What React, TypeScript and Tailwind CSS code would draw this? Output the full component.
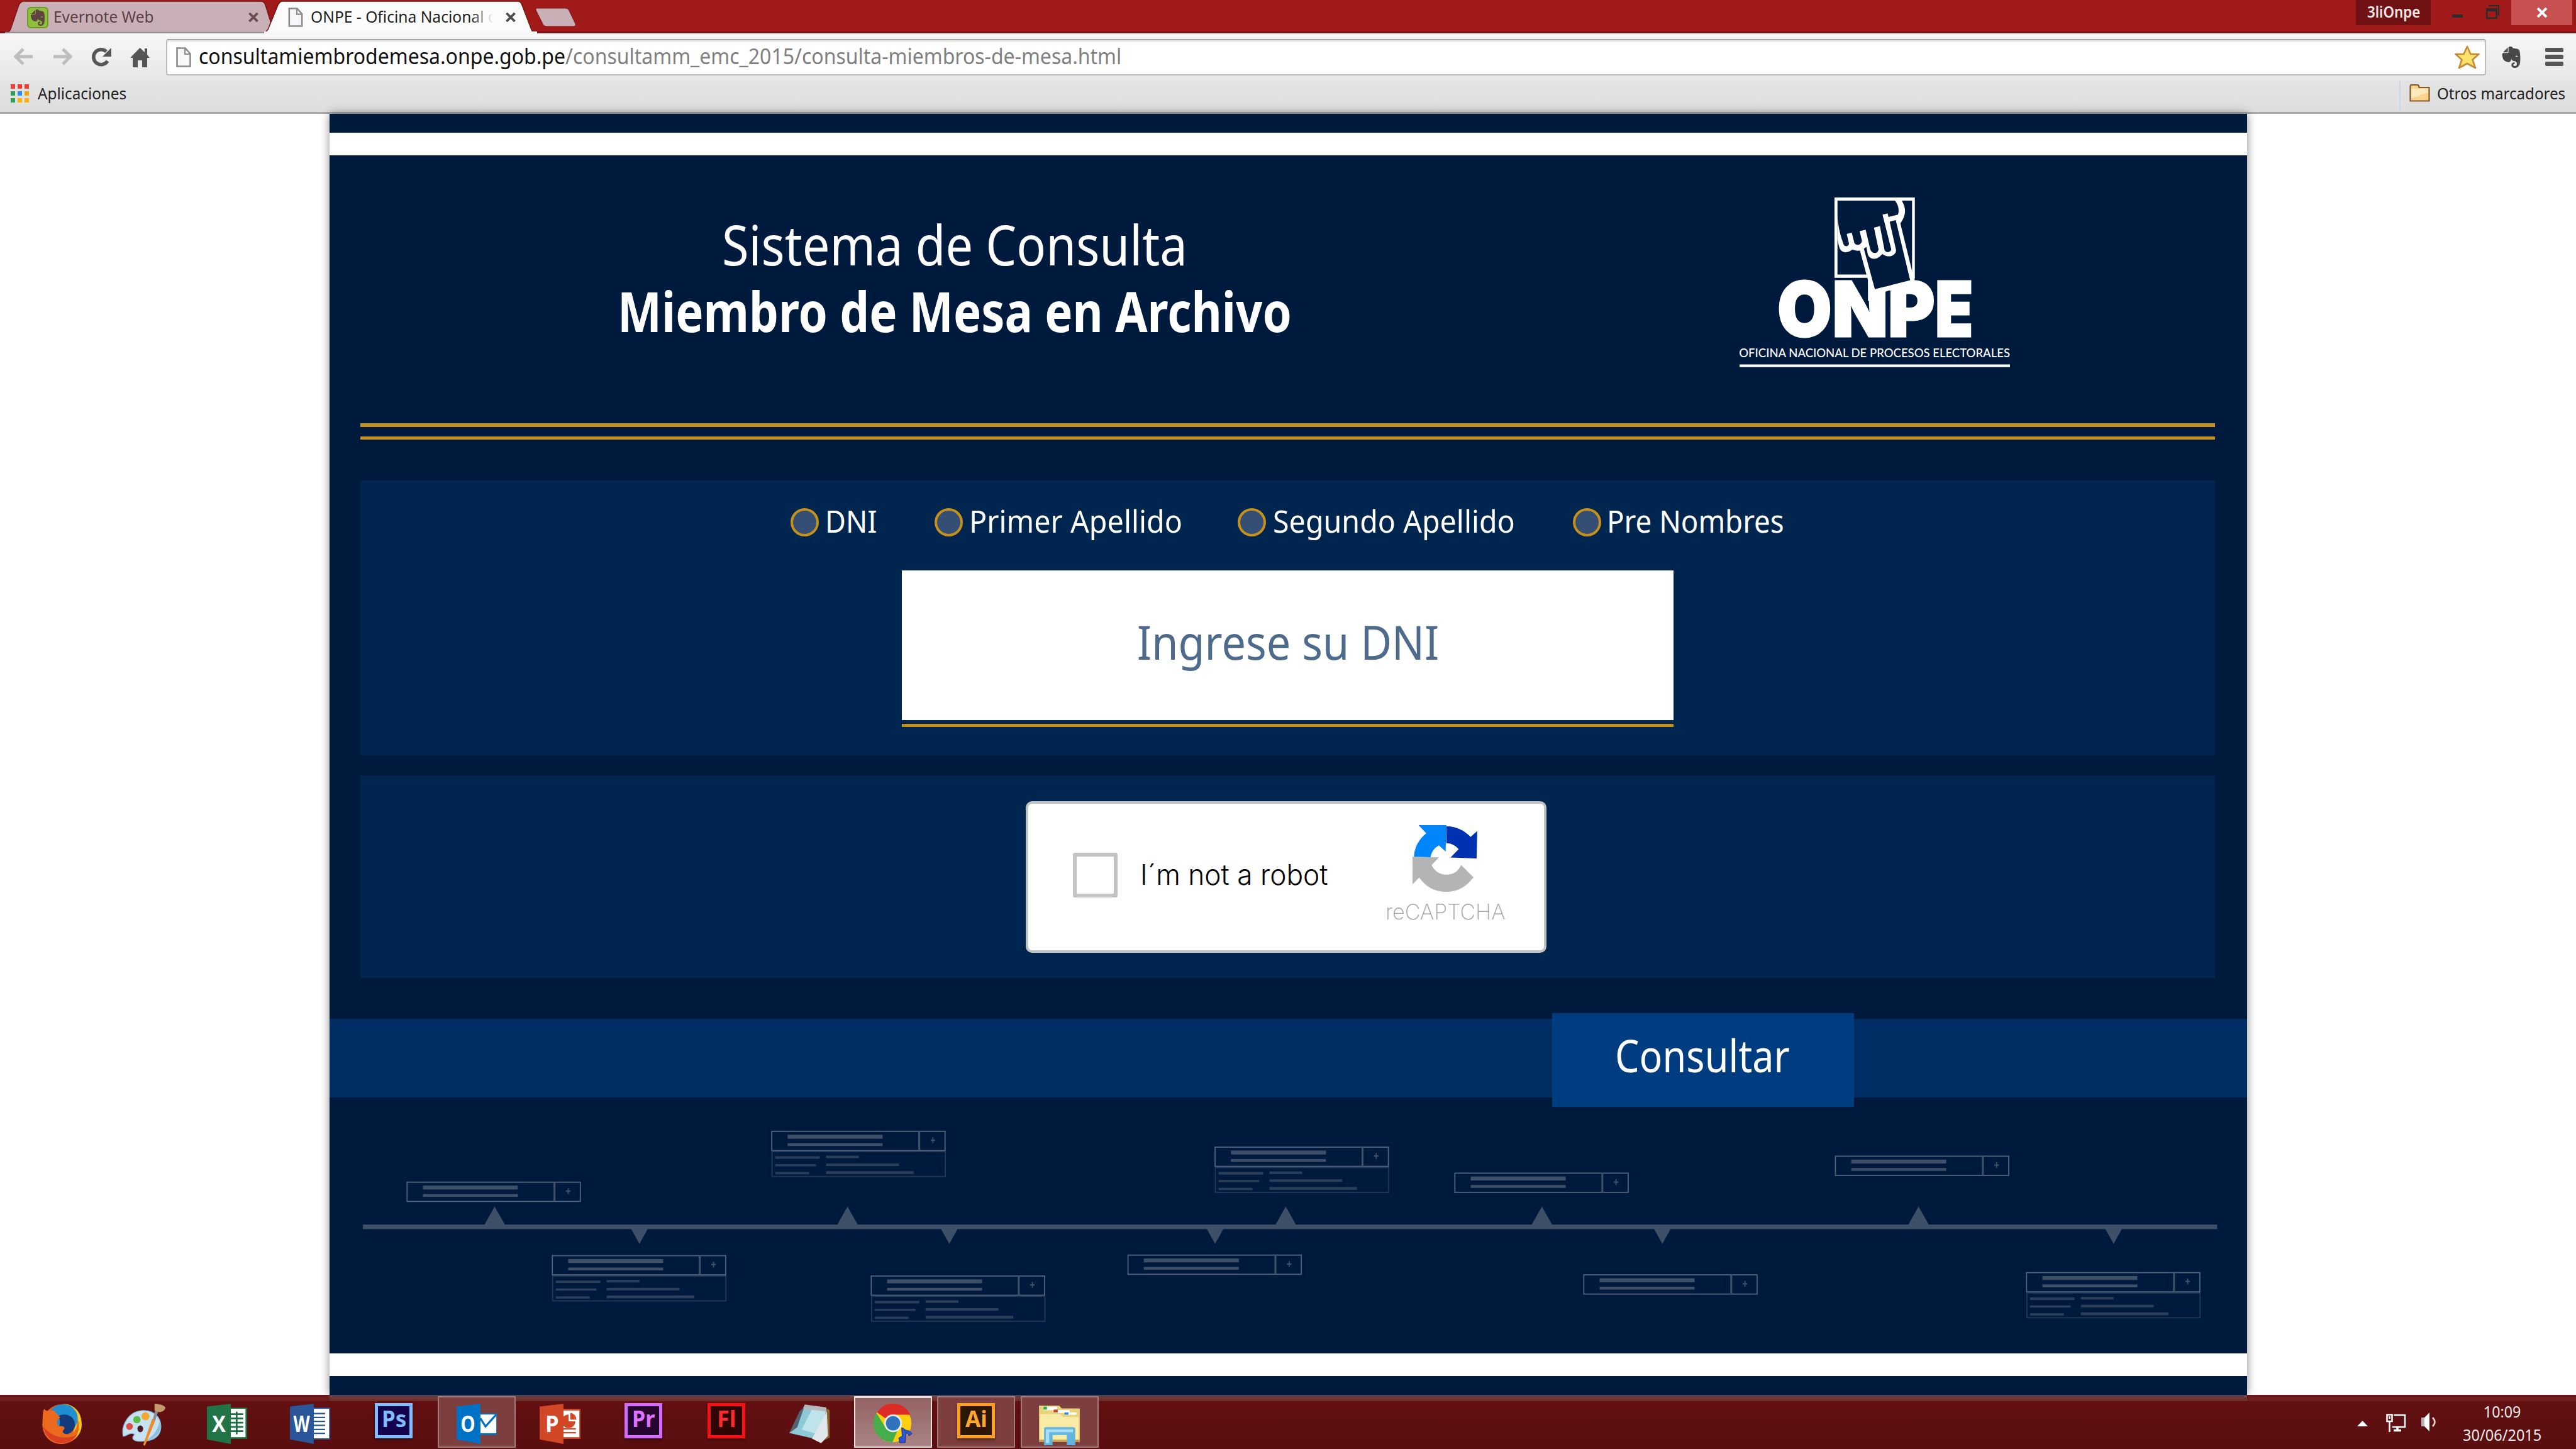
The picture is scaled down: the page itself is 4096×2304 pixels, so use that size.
import React, { useLayoutEffect, useRef, useState } from "react";
import { SiEvernote } from "react-icons/si";

/* Single-line text stretched horizontally so that it fills its box exactly. */
function Fit({ className = "", children }: { className?: string; children: React.ReactNode }) {
  const box = useRef<HTMLDivElement>(null);
  const text = useRef<HTMLSpanElement>(null);
  const [k, setK] = useState(1);
  useLayoutEffect(() => {
    if (box.current && text.current) setK(box.current.clientWidth / text.current.offsetWidth);
  }, []);
  return (
    <div ref={box} className={`shrink-0 whitespace-nowrap leading-none ${className}`}>
      <span ref={text} className="inline-block origin-left" style={{ transform: `scaleX(${k})` }}>
        {children}
      </span>
    </div>
  );
}

function PageIcon({ className = "" }: { className?: string }) {
  return (
    <svg className={`shrink-0 ${className}`} viewBox="0 0 24 32" fill="none">
      <path d="M1.5 1.5h13l8 9v20h-21z" fill="#f7f7f9" stroke="#8c8c8c" strokeWidth="2.6" />
      <path d="M14 1.5v9.5h8.5" stroke="#8c8c8c" strokeWidth="2.2" />
    </svg>
  );
}

function CloseX({ className = "" }: { className?: string }) {
  return (
    <svg className={`shrink-0 ${className}`} viewBox="0 0 18 16" fill="none" stroke="currentColor" strokeWidth="4">
      <path d="M2 1l14 14M16 1L2 15" />
    </svg>
  );
}

function TitleBar() {
  return (
    <div className="relative flex h-[53px] w-full items-start bg-[#a01a1a] shadow-[inset_0_-3px_1px_#7c1313]">
      <div className="relative flex h-[53px] w-[432px] shrink-0 items-start">
        <svg className="absolute left-0 top-0 h-[53px] w-[450px]" viewBox="0 0 450 53">
          <path d="M5 53Q15 52 17 46L30 8Q33 2 38 2H414Q420 2 422 8L436 53Z" fill="#c9b0b7" stroke="#7c1517" strokeWidth="1.5" />
          <path d="M8 52H430" stroke="#8b8f95" strokeWidth="2.5" />
        </svg>
        <div className="relative ml-[43px] mt-[11px] flex h-[34px] w-[34px] shrink-0 items-center justify-center rounded-[6px] border-2 border-[#6d9a22] bg-[#8fbf3a]">
          <SiEvernote className="h-[28px] w-[26px] text-[#5e4340]" />
        </div>
        <Fit className="relative ml-[8px] mt-[14px] w-[159px] text-[25px] text-[#5b3f45]">Evernote Web</Fit>
        <CloseX className="relative ml-[150px] mt-[20px] h-[15px] w-[18px] text-[#6d4a50]" />
      </div>
      <div className="relative flex h-[53px] w-[412px] shrink-0 items-start">
        <svg className="absolute -left-[14px] top-0 h-[53px] w-[440px]" viewBox="0 0 440 53">
          <path d="M2 53L8 47L24 8Q27 2 31 2H405Q410 2 412 8L427 47Q429 52 436 53Z" fill="#fbfbfb" stroke="#6f1515" strokeWidth="1.5" />
          <path d="M2 50h434v3h-434z" fill="#f8f8f8" />
        </svg>
        <PageIcon className="relative ml-[26px] mt-[12px] h-[31px] w-[24px]" />
        <div className="relative ml-[12px] mt-[12px] w-[290px] shrink-0 overflow-hidden pt-[2px]">
          <Fit className="h-[32px] w-[297px] text-[25px] text-[#1f1f1f]">ONPE - Oficina Nacional d</Fit>
          <div className="absolute right-0 top-0 h-[32px] w-[36px] bg-linear-to-r from-transparent to-[#fbfbfb]" />
        </div>
        <CloseX className="relative ml-[19px] mt-[20px] h-[15px] w-[18px] text-[#4d4d4d]" />
      </div>
      <svg className="ml-[7px] mt-[12px] h-[31px] w-[66px] shrink-0" viewBox="0 0 66 31">
        <path d="M3 1H48Q53 1 54 5L64 26Q65 30 61 30H18Q13 30 12 26L1 4Q0 1 3 1Z" fill="#c9b0b7" stroke="#7c1517" />
      </svg>
      <div className="ml-auto flex h-[40px] items-start">
        <div className="h-[40px] w-[119px] bg-[#701214] pl-[18px] pt-[6px]">
          <Fit className="w-[84px] text-[25px] font-semibold text-[#f0e6e6]">3liOnpe</Fit>
        </div>
        <div className="ml-[34px] mt-[23px] h-[5px] w-[17px] bg-[#2c2c2c]" />
        <svg className="ml-[37px] mt-[8px] h-[22px] w-[21px]" viewBox="0 0 21 22" fill="#2c2c2c">
          <path d="M0 5h18v17H0zM2.500 10v9.500h13V10z" fillRule="evenodd" />
          <path d="M4 0h17v17h-2V2H4z" />
        </svg>
        <div className="ml-[19px] mr-[6px] flex h-[40px] w-[97px] items-center justify-center bg-[#c75050]">
          <CloseX className="h-[16px] w-[18px] text-white" />
        </div>
      </div>
    </div>
  );
}

function Toolbar() {
  return (
    <div className="flex h-[75px] w-full items-start bg-linear-to-b from-[#f8f8f8] to-[#e6e6e6]">
      <svg className="ml-[21px] mt-[23px] h-[28px] w-[32px] shrink-0" viewBox="0 0 32 28" fill="none" stroke="#bdbdbd" strokeWidth="5">
        <path d="M31 14H5M16 2L4 14L16 26" />
      </svg>
      <svg className="ml-[31px] mt-[23px] h-[28px] w-[32px] shrink-0" viewBox="0 0 32 28" fill="none" stroke="#bdbdbd" strokeWidth="5">
        <path d="M1 14H27M16 2L28 14L16 26" />
      </svg>
      <svg className="ml-[28px] mt-[22px] h-[32px] w-[34px] shrink-0" viewBox="0 0 34 32">
        <path d="M27 22A12 12 0 1 1 25 7" fill="none" stroke="#555" strokeWidth="5.500" />
        <path d="M33 1V15H19Z" fill="#555" />
      </svg>
      <svg className="ml-[29px] mt-[22px] h-[32px] w-[31px] shrink-0" viewBox="0 0 31 32" fill="#555">
        <path d="M15.500 1L0 17h4v15h8V21h7v11h8V17h4L27 12V2h-4v6z" />
      </svg>
      <div className="ml-[26px] mt-[9px] flex h-[58px] w-[3689px] items-start rounded-[4px] border-2 border-[#bcbcbc] border-t-[#a2a2a2] bg-white shadow-[inset_0_3px_0_#ebebeb]">
        <PageIcon className="ml-[14px] mt-[11px] h-[32px] w-[24px]" />
        <Fit className="ml-[12px] mt-[8px] w-[1467px] text-[34px] text-[#808080]">
          <span className="text-[#111]">consultamiembrodemesa.onpe.gob.pe</span>/consultamm_emc_2015/consulta-miembros-de-mesa.html
        </Fit>
        <svg className="ml-auto mr-[8px] mt-[8px] h-[38px] w-[40px]" viewBox="0 0 40 38">
          <path d="M20 2L25.500 14H38.500L28.500 23L33 36L20 29L7 36L11.500 23L1.500 14H14.500Z" fill="#fde36c" stroke="#c88a34" strokeWidth="2.600" strokeLinejoin="round" />
        </svg>
      </div>
      <SiEvernote className="ml-[23px] mt-[21px] h-[34px] w-[34px] shrink-0 text-[#484848]" />
      <div className="ml-[37px] mt-[23px] flex w-[29px] shrink-0 flex-col gap-[4px]">
        <div className="h-[7px] rounded-[2px] bg-[#555]" />
        <div className="h-[7px] rounded-[2px] bg-[#555]" />
        <div className="h-[7px] rounded-[2px] bg-[#555]" />
      </div>
    </div>
  );
}

function Bookmarks() {
  const dots = ["bg-[#f8372f]", "bg-[#f8372f]", "bg-[#f8372f]", "bg-[#2fa05a]", "bg-[#2b8af3]", "bg-[#efa50a]", "bg-[#2fa05a]", "bg-[#fbb20a]", "bg-[#fbb20a]"];
  return (
    <div className="flex h-[53px] w-full items-start border-b-[3px] border-[#a8a8a8] bg-linear-to-b from-[#e4e4e4] to-[#dedede]">
      <div className="ml-[17px] mt-[6px] grid w-[29px] shrink-0 grid-cols-3 gap-x-[4px] gap-y-[4px]">
        {dots.map((c, i) => (
          <div key={i} className={`h-[7px] w-[7px] ${c}`} />
        ))}
      </div>
      <Fit className="ml-[14px] mt-[7px] w-[141px] text-[26px] text-[#222]">Aplicaciones</Fit>
      <div className="ml-auto mt-[0px] h-[48px] w-[2px] bg-[#ccd6e0]" />
      <svg className="ml-[14px] mt-[6px] h-[28px] w-[33px] shrink-0" viewBox="0 0 33 28">
        <path d="M1.500 26.500V2.500Q2 1 4 1H13Q15 1 15.500 5H31.500V26.500Z" fill="#fdd28b" stroke="#835a30" strokeWidth="2.200" />
        <path d="M3 7H30V13L3 22Z" fill="#fee9bd" />
      </svg>
      <Fit className="ml-[11px] mr-[17px] mt-[7px] w-[204px] text-[26px] text-[#222]">Otros marcadores</Fit>
    </div>
  );
}

function OnpeLogo() {
  const letters = [
    { ch: "O", x: 350, w: 235 },
    { ch: "N", x: 588, w: 241 },
    { ch: "P", x: 829, w: 203 },
    { ch: "E", x: 1033, w: 164 },
  ];
  return (
    <svg className="h-[270px] w-[430px] shrink-0 overflow-visible" viewBox="186 90 1171 900" preserveAspectRatio="none">
      <g fill="#fff">
        <g stroke="#fff" strokeWidth="10" fontFamily="Inter, sans-serif" fontWeight="900" fontSize="404">
          {letters.map((l) => (
            <text key={l.ch} x={l.x} y="827" textLength={l.w} lengthAdjust="spacingAndGlyphs">
              {l.ch}
            </text>
          ))}
        </g>
        <path d="M597 90H945V516H933V107H610V498H740V516H597Z" />
        <path d="M742 530L770 577L926 528H945L930 583H833L820 588L742 640Z" />
        <path d="M720 360L770 577L926 528L862 212Z" fill="#001a3d" />
        <path d="M707 370L724 360L772 577H765L742 540V528Z" />
        <path d="M862 208L882 226L933 480L945 516L943 530H925Z" />
        <path d="M610 180C612 250 625 300 637 340C642 352 658 352 660 335L650 283L672 277L683 330C690 348 712 345 716 320L706 268L732 261L752 365C760 392 785 390 788 365L768 250L794 242L814 370C822 385 840 382 843 365L805 181L827 174L831 193L872 181C878 160 875 130 858 106H888C905 140 912 180 882 228L862 210L836 218L864 370C862 400 830 414 804 389C785 420 755 425 742 395L735 352L724 362L707 372C690 374 682 369 674 366C655 387 630 385 620 362C614 340 612 325 610 310Z" />
        <text x="184" y="938" fontFamily="Lato, sans-serif" fontSize="62" fontWeight="500" textLength="1173" lengthAdjust="spacingAndGlyphs">
          {"OFICINA NACIONAL DE PROCESOS ELECTORALES"}
        </text>
        <path d="M186 975H1357V989H186Z" />
      </g>
    </svg>
  );
}

function Header() {
  return (
    <div className="flex h-[426px] w-full items-start">
      <div className="ml-[459px] mt-[98px] flex w-[1070px] shrink-0 flex-col items-center text-[87px] text-white">
        <Fit className="h-[106px] w-[740px]">Sistema de Consulta</Fit>
        <Fit className="w-[1072px] font-bold">Miembro de Mesa en Archivo</Fit>
      </div>
      <div className="ml-[713px] mt-[67px]">
        <OnpeLogo />
      </div>
    </div>
  );
}

const circle = "h-[45px] w-[45px] shrink-0 rounded-full border-[4.500px] border-[#c6911a] bg-[#344f73]";

function SearchPanel() {
  return (
    <div className="ml-[49px] mt-[65px] h-[437px] w-[2949px] bg-[#00254e] pt-[44px]">
      <div className="flex h-[45px] items-start text-[50px] text-white">
        <div className={`ml-[684px] ${circle}`} />
        <Fit className="-mt-[5px] ml-[10px] w-[82px]">DNI</Fit>
        <div className={`ml-[92px] ${circle}`} />
        <Fit className="-mt-[5px] ml-[10px] w-[339px]">Primer Apellido</Fit>
        <div className={`ml-[88px] ${circle}`} />
        <Fit className="-mt-[5px] ml-[11px] w-[385px]">Segundo Apellido</Fit>
        <div className={`ml-[92px] ${circle}`} />
        <Fit className="-mt-[5px] ml-[9px] w-[282px]">Pre Nombres</Fit>
      </div>
      <div className="mx-auto mt-[54px] flex h-[238px] w-[1227px] justify-center bg-white pt-[76px]">
        <Fit className="w-[480px] text-[75px] text-[#4e6a8c]">Ingrese su DNI</Fit>
      </div>
      <div className="mx-auto mt-[6px] h-[5px] w-[1227px] bg-[#c6911a]" />
    </div>
  );
}

function CaptchaPanel() {
  return (
    <div className="ml-[49px] mt-[32px] h-[322px] w-[2949px] bg-[#00254e] pt-[41px]">
      <div className="ml-[1058px] flex h-[241px] w-[828px] items-start rounded-[10px] border-4 border-[#c3c3c3] bg-white font-['Inter',sans-serif]">
        <div className="ml-[71px] mt-[78px] h-[71px] w-[71px] shrink-0 rounded-[3px] border-[6px] border-[#c3c3c3]" />
        <Fit className="ml-[36px] mt-[90px] w-[299px] text-[45px] font-light text-black">I´m not a robot</Fit>
        <div className="ml-[91px] mt-[34px] w-[190px]">
          <svg className="ml-[43px] h-[106px] w-[103px]" viewBox="1149 207 184 354" preserveAspectRatio="none">
            <path d="M1149 375L1224 378L1203 420Q1218 470 1245 470Q1275 470 1287 418L1322 484Q1292 561 1245 561Q1196 561 1168 485L1149 522Z" fill="#b4b4b4" />
            <path d="M1166 207H1245L1243 347L1224 315Q1204 335 1200 377L1153 375Q1155 300 1188 250Z" fill="#0086fb" />
            <path d="M1245 213Q1285 214 1314 270L1333 238L1331 384L1257 379L1280 335Q1266 303 1245 303Z" fill="#0031b0" />
          </svg>
          <Fit className="mt-[15px] w-[190px] text-[34px] font-extralight text-[#a8a8a8]">reCAPTCHA</Fit>
        </div>
      </div>
    </div>
  );
}

type Card = { x: number; y: number; open?: number };
const cards: Card[] = [
  { x: 719, y: 2089 },
  { x: 1364, y: 1999, open: 46 },
  { x: 976, y: 2219, open: 46 },
  { x: 1540, y: 2255, open: 46 },
  { x: 2148, y: 2027, open: 46 },
  { x: 2572, y: 2073 },
  { x: 3245, y: 2043 },
  { x: 1994, y: 2218 },
  { x: 2800, y: 2253 },
  { x: 3583, y: 2249, open: 46 },
];
const ups = [875, 1499, 2274, 2727, 3393];
const downs = [1131, 1679, 2149, 2940, 3738];

function Timeline() {
  return (
    <svg className="h-[407px] w-full" viewBox="583 1940 3391 453" preserveAspectRatio="none">
      <g fill="#3e4f68">
        <rect x="642" y="2165" width="3279" height="8" />
        {ups.map((x) => (
          <path key={x} d={`M${x} 2133l18.500 33h-37z`} />
        ))}
        {downs.map((x) => (
          <path key={x} d={`M${x} 2199l15-27h-30z`} />
        ))}
      </g>
      {cards.map((c) => (
        <g key={`${c.x}`} transform={`translate(${c.x} ${c.y})`}>
          {c.open && (
            <g fill="#2c3f5a">
              <rect x="1.500" y="37" width="306.500" height={c.open - 2} fill="none" stroke="#243957" strokeWidth="2" />
              <rect x="7" y="45" width="79" height="4.500" />
              <rect x="7" y="59" width="72" height="4" />
              <rect x="7" y="73" width="60" height="4" />
              <rect x="97" y="44" width="58" height="4.500" />
              <rect x="97" y="58" width="129" height="4.500" />
              <rect x="97" y="71.500" width="155" height="5" />
            </g>
          )}
          <rect x="1" y="1" width="306.500" height="34" fill="none" stroke="#51627c" strokeWidth="2" />
          <g fill="#3e4f68">
            <rect x="260" y="1" width="3.500" height="34" />
            <rect x="29" y="7" width="168" height="7" />
            <rect x="29" y="22" width="168" height="5" />
            <path d="M285 11.500h2v4h3v2.500h-3v4h-2v-4h-3v-2.500h3z" />
          </g>
        </g>
      ))}
    </svg>
  );
}

function Letter({ x, w, children }: { x: number; w: number; children: string }) {
  return (
    <text x={x} y="50" fontFamily="Open Sans, sans-serif" fontWeight="700" fontSize="40" fill="#fff" textLength={w} lengthAdjust="spacingAndGlyphs">
      {children}
    </text>
  );
}

const icon = "mt-[10px] h-[64px] w-[65px]";

function Slot({ mode = "", children }: { mode?: "" | "open" | "active"; children: React.ReactNode }) {
  const look =
    mode === "active"
      ? "border-2 border-t-[3px] border-[#e6dcdc] bg-linear-to-b from-[#946262] to-[#a98484]"
      : mode === "open"
        ? "border-2 border-[#a27c7c] bg-[#7c3e3f]"
        : "border-2 border-transparent";
  return <div className={`flex h-[82px] w-[124px] shrink-0 justify-center ${look}`}>{children}</div>;
}

function Adobe({ cls, text, w }: { cls: string; text: string; w: string }) {
  return (
    <div className={`mt-[9px] flex h-[56px] w-[60px] items-start justify-center border-[5px] pt-[2px] shadow-[0_3px_4px_rgba(0,0,0,0.4)] ${cls}`}>
      <Fit className={`text-[36px] font-bold ${w}`}>{text}</Fit>
    </div>
  );
}

function Taskbar() {
  return (
    <div className="relative flex h-[86px] w-full items-start bg-linear-to-b from-[#641012] to-[#5a0e10]">
      <div className="absolute inset-x-0 top-[1px] h-[9px] bg-[#701e20]" />
      <div className="absolute left-[524px] top-0 h-[10px] w-[3049px] border-t-2 border-[#4d4256] bg-linear-to-b from-[#70403e] to-[#6d2a2a]" />
      <div className="relative ml-[35px] mt-[2px] flex gap-[8.300px]">
        <Slot>
          <svg className={icon} viewBox="0 0 72 71">
            <ellipse cx="37" cy="36" rx="34" ry="35" fill="#e8591c" />
            <path d="M37 0C60 0 72 16 72 36C72 56 58 66 44 69C62 56 66 20 52 4Z" fill="#f9c521" />
            <ellipse cx="39" cy="26" rx="26" ry="25" fill="#1f8fd2" />
            <path d="M30 22C46 14 62 24 60 40C56 52 46 56 38 53C24 46 40 36 30 22Z" fill="#123a7c" />
            <path d="M6 9C10 15 14 12 24 12C26 18 34 22 34 25C28 28 26 34 32 40C40 38 44 42 40 46C36 50 40 54 50 54C62 52 66 36 64 24C74 50 58 71 36 71C12 71 0 50 3 30C3 22 3 14 6 9Z" fill="#ec6a1d" />
            <path d="M4 40C8 62 26 70 38 70C50 70 60 62 64 54C50 64 20 62 4 40Z" fill="#d8401f" />
          </svg>
        </Slot>
        <Slot>
          <svg className="mt-[10px] h-[67px] w-[70px]" viewBox="0 0 77 74">
            <path d="M38 12C60 12 69 28 68 42C67 58 54 66 32 66C18 66 16 60 22 54C16 48 6 58 2 57C-2 40 10 12 38 12Z" fill="#c4e2f1" stroke="#88b9d4" strokeWidth="1.500" />
            <path d="M66 30C72 50 58 64 36 66C54 60 62 48 66 30Z" fill="#8cc0dc" />
            <ellipse cx="32" cy="44" rx="5" ry="6" fill="#4a1d24" />
            <circle cx="41" cy="22" r="7" fill="#f0a92c" />
            <circle cx="26" cy="28" r="6.500" fill="#5dbb46" />
            <circle cx="13" cy="40" r="6" fill="#e04f45" />
            <path d="M53 26L59 28L40 74L37 72Z" fill="#ee8c28" />
            <path d="M58 12L63 14L58 30L54 28Z" fill="#8b8f94" />
            <path d="M57 0C66 0 77 4 76 8C74 14 66 16 62 14L57 12Z" fill="#c49a6c" />
          </svg>
        </Slot>
        <Slot>
          <svg className={icon} viewBox="0 0 72 71">
            <rect x="40" y="7" width="31" height="55" fill="#1d7244" />
            <rect x="42" y="9" width="26" height="50" fill="#fff" />
            <path d="M42 17h22v3H42zM42 24.500h22v3H42zM42 32h22v3H42zM42 39.500h22v3H42zM42 47h22v3H42z" fill="#1d7244" />
            <path d="M51 14h3v40h-3z" fill="#1d7244" />
            <path d="M0 5L42 0V71L0 63Z" fill="#217446" />
            <Letter x={9} w={24}>X</Letter>
          </svg>
        </Slot>
        <Slot>
          <svg className={icon} viewBox="0 0 72 71">
            <rect x="40" y="7" width="31" height="56" fill="#2a579a" />
            <rect x="42" y="9" width="27" height="52" fill="#fff" />
            <path d="M42 16h20v2.500H42zM42 23h20v2.500H42zM42 30h20v2.500H42zM42 37h20v2.500H42zM42 44h20v2.500H42zM42 51h20v2.500H42z" fill="#2a579a" />
            <path d="M0 5L42 0V71L0 63Z" fill="#2a579a" />
            <Letter x={6} w={29}>W</Letter>
          </svg>
        </Slot>
        <Slot>
          <Adobe cls="border-[#80bdff] bg-[#12034c] text-[#80bdff]" text="Ps" w="w-[39px]" />
        </Slot>
        <Slot mode="open">
          <svg className={icon} viewBox="0 0 72 71">
            <rect x="40" y="17" width="31" height="38" fill="#0072c6" />
            <rect x="42" y="19" width="28" height="33" fill="#fff" />
            <path d="M42 26L51 40L70 19" fill="none" stroke="#0072c6" strokeWidth="3.500" />
            <path d="M0 5L42 0V71L0 63Z" fill="#0072c6" />
            <Letter x={7} w={26}>O</Letter>
          </svg>
        </Slot>
        <Slot>
          <svg className={icon} viewBox="0 0 72 71">
            <rect x="40" y="9" width="32" height="53" fill="#d24726" />
            <rect x="42" y="12" width="28" height="47" fill="#fff" />
            <path d="M51 19V31H63A12 12 0 1 1 51 19Z" fill="#d24726" />
            <path d="M54 16A12 12 0 0 1 65 28H54Z" fill="#d24726" />
            <path d="M42 43h22v2.500H42zM42 50h22v2.500H42z" fill="#d24726" />
            <path d="M0 5L42 0V71L0 63Z" fill="#d24726" />
            <Letter x={10} w={24}>P</Letter>
          </svg>
        </Slot>
        <Slot>
          <Adobe cls="border-[#d36bff] bg-[#26062f] text-[#df73ff]" text="Pr" w="w-[36px]" />
        </Slot>
        <Slot>
          <Adobe cls="border-[#f71014] bg-[#2e0504] text-[#f72c2c]" text="Fl" w="w-[31px]" />
        </Slot>
        <Slot>
          <svg className="mt-[11px] h-[62px] w-[66px]" viewBox="0 0 73 68">
            <path d="M64 6L71 10V58L60 64Z" fill="#8a6230" />
            <path d="M26 3L65 9L52 62L0 50Z" fill="#8ec9d8" />
            <path d="M40 8L65 12L50 52L22 44Z" fill="#bfe3ea" />
            <path d="M26 5L14 40L0 50L18 12Z" fill="#4f6370" />
            <path d="M66 12L68 55L56 68L40 60Z" fill="#dfe7ea" />
            <path d="M27 0L65 5V12L25 8Z" fill="#b6b9bb" />
          </svg>
        </Slot>
        <Slot mode="active">
          <svg className="mt-[9px] h-[64px] w-[62px]" viewBox="0 0 68 70">
            <circle cx="33" cy="34" r="33" fill="#fdd00f" />
            <path d="M33 34L6 15A33 33 0 0 1 64 19H33Z" fill="#dd2c25" />
            <path d="M5 16A33 33 0 0 0 33 67L42 46L20 40Z" fill="#45ad49" />
            <circle cx="34" cy="34" r="15.500" fill="#e8eef2" />
            <circle cx="34" cy="34" r="12.500" fill="#2f73bd" />
            <path d="M49 42C54 42 54 47 62 47L67 52L62 56L58 50L56 58L55 68H46L44 60L50 56Z" fill="#2a55d8" stroke="#16266b" strokeWidth="1" />
          </svg>
        </Slot>
        <Slot mode="open">
          <Adobe cls="border-[#ff9f22] bg-[#2b1607] text-[#ffa630]" text="Ai" w="w-[35px]" />
        </Slot>
        <Slot mode="open">
          <svg className="mt-[13px] h-[63px] w-[69px]" viewBox="0 0 76 70">
            <path d="M2 0H38L42 5H74V64H2Z" fill="#e9d27a" />
            <path d="M10 2H34V8H10zM30 8H56V13H30zM48 12H68V16H48z" fill="#fff" />
            <rect x="10" y="2" width="6" height="5" fill="#16b63a" />
            <rect x="28" y="7" width="7" height="5" fill="#d0432a" />
            <rect x="47" y="12" width="7" height="4" fill="#2b8ce6" />
            <path d="M4 15H40L44 20H72V63H4Z" fill="#f7eba6" />
            <path d="M2 60H74V64H2Z" fill="#c6a556" />
            <path d="M11 70V40Q11 38 14 38H62Q66 38 66 41V70H51V52H26V70Z" fill="#63b5de" />
            <path d="M14 42H62V47H20V66H14Z" fill="#a9def5" />
          </svg>
        </Slot>
      </div>
      <div className="relative ml-auto flex items-start text-[#f3eaea]">
        <svg className="mt-[41px] h-[9px] w-[17px]" viewBox="0 0 17 9">
          <path d="M8.500 0L17 9H0Z" fill="#fff" />
        </svg>
        <svg className="ml-[28px] mt-[28px] h-[32px] w-[33px]" viewBox="0 0 33 32" fill="none" stroke="#fff" strokeWidth="2.500">
          <path d="M13 4H31V23H11" />
          <path d="M13 28.500H25M19 23V28" strokeWidth="3.500" />
          <path d="M2.500 3.500H10.500V14H2.500zM6.500 6V10M6.500 14V31" />
        </svg>
        <svg className="ml-[22px] mt-[27px] h-[32px] w-[28px]" viewBox="0 0 28 32">
          <path d="M2 9H7V23H2Z" fill="#b9b0b0" />
          <path d="M7 9L15 1V31L7 23Z" fill="#fff" />
          <path d="M20 9Q27 16 20 23" fill="none" stroke="#e0d4d4" strokeWidth="2.500" />
        </svg>
        <div className="ml-[40px] mr-[55px] mt-[13px] flex w-[125px] flex-col items-center text-[26px]">
          <Fit className="h-[37px] w-[59px]">10:09</Fit>
          <Fit className="w-[125px]">30/06/2015</Fit>
        </div>
      </div>
    </div>
  );
}

export default function App() {
  return (
    <div className="flex h-[2304px] w-[4096px] flex-col overflow-hidden bg-white font-['Noto_Sans',sans-serif]">
      <TitleBar />
      <Toolbar />
      <Bookmarks />
      <main className="relative ml-[524px] flex h-[2037px] w-[3049px] shrink-0 flex-col bg-[#001a3d] shadow-[0_0_14px_rgba(0,0,0,0.45)]">
        <div className="h-[30px] shrink-0" />
        <div className="h-[36px] shrink-0 bg-white" />
        <Header />
        <div className="ml-[49px] flex h-[26px] w-[2949px] shrink-0 flex-col justify-between">
          <div className="h-[5.500px] bg-[#c6911a]" />
          <div className="h-[5.500px] bg-[#c6911a]" />
        </div>
        <SearchPanel />
        <CaptchaPanel />
        <div className="mt-[65px] h-[125px] w-full shrink-0 bg-[#002d63]">
          <button className="relative -top-[9px] ml-[1944px] flex h-[149px] w-[480px] bg-[#003d80] pl-[100px] pt-[31px] text-[71px] text-white">
            <Fit className="w-[278px] text-left">Consultar</Fit>
          </button>
        </div>
        <Timeline />
        <div className="h-[36px] shrink-0 bg-white" />
      </main>
      <Taskbar />
    </div>
  );
}
